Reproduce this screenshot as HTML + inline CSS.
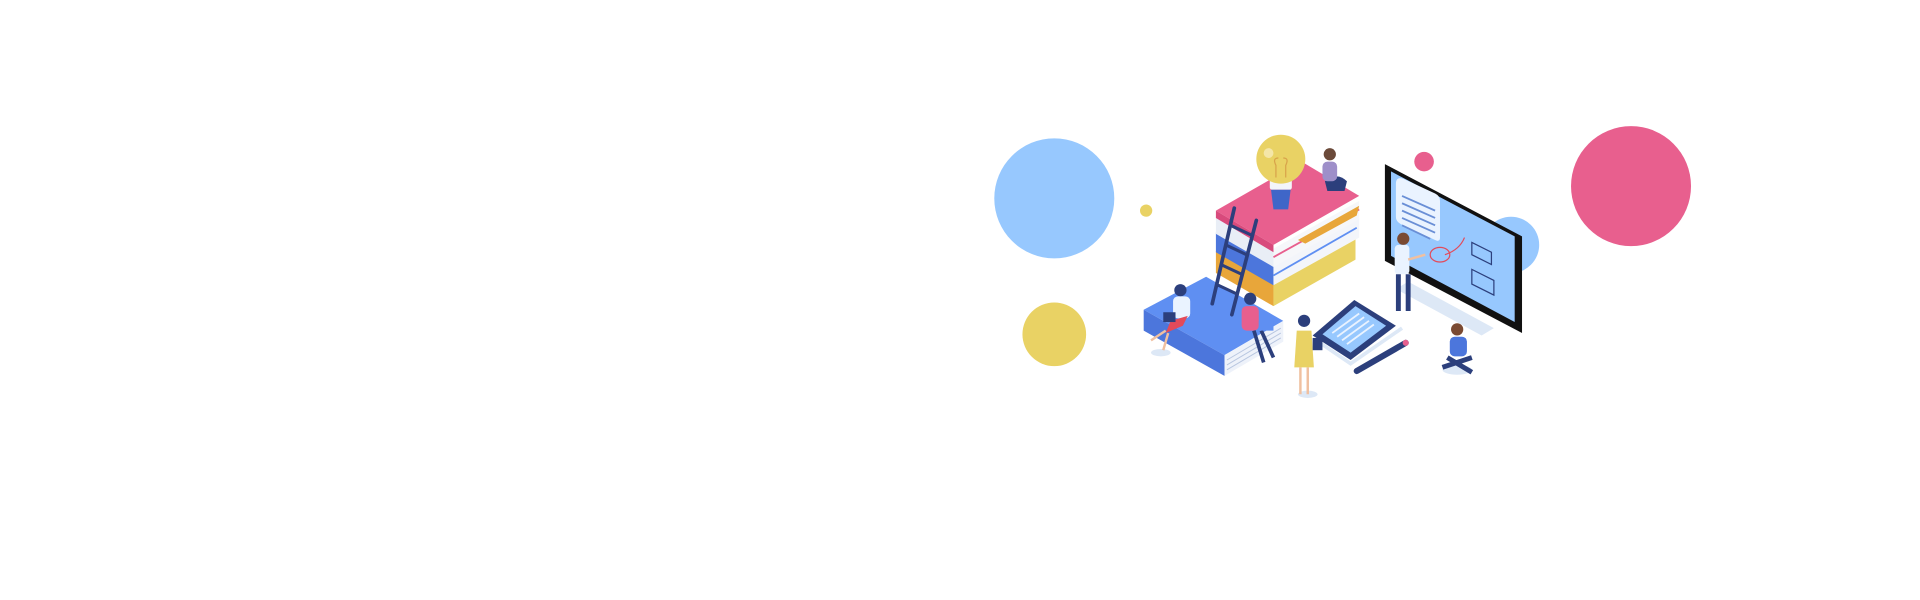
<!DOCTYPE html>
<html><head><meta charset="utf-8"><style>
html,body{margin:0;padding:0;background:#fff;width:1920px;height:600px;overflow:hidden}
svg{display:block}
</style></head><body>
<svg width="1920" height="600" viewBox="0 0 1568 490" preserveAspectRatio="none" xmlns="http://www.w3.org/2000/svg">
<!-- circles -->
<circle cx="861" cy="162" r="49" fill="#97c8fe"/>
<circle cx="861" cy="273" r="26" fill="#e9d264"/>
<circle cx="936" cy="172" r="5" fill="#e9d264"/>
<circle cx="1163" cy="132" r="8" fill="#e85f8e"/>
<circle cx="1332" cy="152" r="49" fill="#e85f8e"/>
<circle cx="1234" cy="200" r="23" fill="#97c8fe"/>
<!-- shadows -->
<path d="M1150,230 L1220,268 L1210,274 L1140,236Z" fill="#dde8f6"/>
<ellipse cx="1068" cy="322" rx="8" ry="3" fill="#dde8f6"/>
<ellipse cx="948" cy="288" rx="8" ry="3" fill="#dde8f6"/>
<ellipse cx="1190" cy="302" rx="12" ry="4" fill="#dde8f6"/>
<!-- blue book -->
<path d="M934,253 L985,226 L1048,262 L1000,290Z" fill="#5f8ff2"/>
<path d="M934,253 L934,270 L1000,307 L1000,290Z" fill="#4c76dc"/>
<path d="M1000,290 L1048,262 L1048,279 L1000,307Z" fill="#eef2fa"/>
<path d="M1002,294 L1046,268 M1002,298 L1046,272 M1002,302 L1046,276" stroke="#b8c6e0" stroke-width="0.8"/>
<!-- book stack -->
<path d="M993,205 L1040,232 L1040,250 L993,223Z" fill="#e8a63a"/>
<path d="M1040,232 L1107,194 L1107,212 L1040,250Z" fill="#e9d264"/>
<path d="M993,190 L1040,217 L1040,233 L993,206Z" fill="#4c76dc"/>
<path d="M1040,217 L1110,178 L1110,194 L1040,233Z" fill="#f3f5fa"/>
<path d="M993,176 L1040,203 L1040,218 L993,191Z" fill="#e9eef6"/>
<path d="M1040,203 L1110,164 L1110,179 L1040,218Z" fill="#f6f7fa"/>
<path d="M1040,210 L1110,171" stroke="#e85f8e" stroke-width="1.5"/>
<path d="M1040,225 L1108,186" stroke="#5f8ff2" stroke-width="1.5"/>
<path d="M993,172 L1063,132 L1110,160 L1040,200Z" fill="#e85f8e"/>
<path d="M993,172 L1040,200 L1040,206 L993,178Z" fill="#d84a7c"/>
<path d="M1060,196 L1110,168 L1108,176 L1066,199Z" fill="#e8a63a"/>
<!-- bulb -->
<rect x="1037" y="143" width="18" height="12" rx="2" fill="#f3f5fa"/>
<path d="M1038,155 h16 l-2,16 h-12Z" fill="#3f66c8"/>
<circle cx="1046" cy="130" r="20" fill="#e9d264"/>
<circle cx="1036" cy="125" r="4" fill="#f4e6a8"/>
<path d="M1042,145 v-10 q-3,-6 2,-6 M1050,145 v-10 q3,-6 -2,-6" stroke="#d8a34a" stroke-width="1" fill="none"/>
<!-- girl top -->
<path d="M1082,148 q10,-8 18,0 l-2,8 h-14Z" fill="#2c3f7c"/>
<rect x="1080" y="132" width="12" height="16" rx="4" fill="#9e8fc9"/>
<circle cx="1086" cy="126" r="5" fill="#6b4a3a"/>
<!-- ladder -->
<path d="M1008,170 L990,248 M1026,180 L1006,257" stroke="#2c3f7c" stroke-width="3" stroke-linecap="round"/>
<path d="M1005,184 L1022,192 M1001,200 L1018,208 M997,216 L1014,224 M993,232 L1010,240" stroke="#2c3f7c" stroke-width="2.5"/>
<!-- monitor -->
<path d="M1131,134 L1243,193 L1243,272 L1131,213Z" fill="#111"/>
<path d="M1136,140 L1237,193 L1237,263 L1136,209Z" fill="#97c8fe"/>
<path d="M1140,150 q0,-6 6,-4 l26,12 q4,2 4,6 v30 q0,4 -4,2 l-28,-13 q-4,-2 -4,-6Z" fill="#eaf3ff"/>
<path d="M1145,160 L1172,172 M1145,166 L1172,178 M1145,172 L1172,184 M1145,178 L1172,190 M1145,184 L1168,195" stroke="#6a8fd6" stroke-width="1.5"/>
<ellipse cx="1176" cy="208" rx="8" ry="6" fill="none" stroke="#e34a5a" stroke-width="1"/>
<path d="M1180,208 q12,-4 16,-14" stroke="#e34a5a" fill="none"/>
<path d="M1202,198 l16,8 v10 l-16,-8Z M1202,220 l18,9 v12 l-18,-9Z" fill="none" stroke="#2c3f7c" stroke-width="1"/>
<!-- teacher -->
<rect x="1139" y="200" width="12" height="24" rx="3" fill="#eaf3ff"/>
<path d="M1142,224 v30 M1150,224 v30" stroke="#2c3f7c" stroke-width="4"/>
<circle cx="1146" cy="195" r="5" fill="#7a4a32"/>
<path d="M1150,212 l14,-4" stroke="#f0c0a0" stroke-width="2"/>
<!-- tablet -->
<path d="M1072,274 L1106,245 L1140,266 L1103,294Z" fill="#2c3f7c"/>
<path d="M1080,273 L1107,250 L1132,266 L1103,288Z" fill="#97c8fe"/>
<path d="M1088,272 L1110,256 M1092,275 L1114,259 M1096,278 L1118,262 M1100,281 L1122,265" stroke="#eaf3ff" stroke-width="1.5"/>
<path d="M1078,280 L1103,297 L1145,268" stroke="#dde8f6" stroke-width="3" fill="none"/>
<!-- pencil -->
<path d="M1108,303 L1148,280" stroke="#2c3f7c" stroke-width="5" stroke-linecap="round"/>
<circle cx="1148" cy="280" r="2.5" fill="#e85f8e"/>
<!-- girl on book -->
<circle cx="964" cy="237" r="5" fill="#2c3f7c"/>
<rect x="958" y="242" width="14" height="18" rx="4" fill="#eaf3ff"/>
<path d="M956,262 l14,-4 l-4,8 l-14,6" fill="#e34a5a"/>
<path d="M952,270 l-12,8 M954,272 l-4,14" stroke="#f0c0a0" stroke-width="2"/>
<rect x="950" y="255" width="10" height="8" fill="#2c3f7c"/>
<!-- boy pink -->
<circle cx="1021" cy="244" r="5" fill="#2c3f7c"/>
<rect x="1014" y="250" width="14" height="20" rx="4" fill="#e85f8e"/>
<path d="M1024,270 l8,26 M1030,270 l10,22" stroke="#2c3f7c" stroke-width="3"/>
<rect x="1028" y="262" width="12" height="8" fill="#5f8ff2"/>
<!-- yellow girl -->
<circle cx="1065" cy="262" r="5" fill="#2c3f7c"/>
<path d="M1059,270 h12 l2,30 h-16Z" fill="#e9d264"/>
<path d="M1062,300 v22 M1068,300 v22" stroke="#f0c0a0" stroke-width="2"/>
<rect x="1072" y="276" width="8" height="10" fill="#2c3f7c"/>
<!-- seated boy -->
<circle cx="1190" cy="269" r="5" fill="#7a4a32"/>
<rect x="1184" y="275" width="14" height="16" rx="4" fill="#4c76dc"/>
<path d="M1178,300 l24,-8 M1182,292 l20,12" stroke="#2c3f7c" stroke-width="4"/>
</svg>
</body></html>
